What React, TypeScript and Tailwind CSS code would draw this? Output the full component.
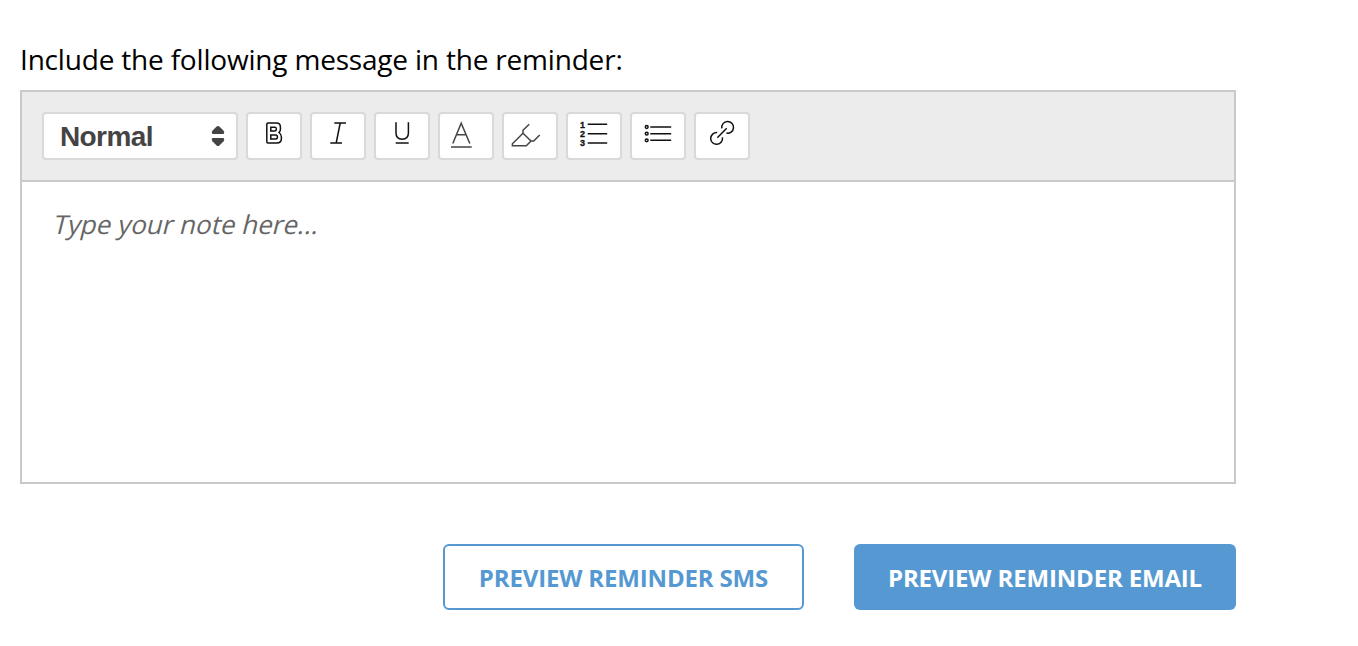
import React from 'react';

type ToolProps = {
    label: string;
    children: React.ReactNode;
};

const ToolButton: React.FC<ToolProps> = ({ label, children }) => (
    <button type="button" aria-label={label} className="h-12 w-14 rounded-[4px] border-2 border-[#d9d9d9] bg-white">
        <svg viewBox="2 2 52 44" className="block h-[44px] w-[52px]" fill="none" stroke="#111" strokeWidth="1.5">
            {children}
        </svg>
    </button>
);

const Toolbar: React.FC = () => (
    <div className="flex h-[90px] items-start gap-2 border-b-2 border-[#c9c9c9] bg-[#ececec] p-5">
        <button
            type="button"
            className="flex h-12 w-[196px] items-center justify-between rounded-[4px] border-2 border-[#d9d9d9] bg-white pl-4 pr-[11px] text-[#444]"
        >
            <span className="pt-0.5 font-['Liberation_Sans',sans-serif] text-[28px] font-bold leading-[42px] tracking-[-0.6px]">Normal</span>
            <svg viewBox="0 0 14 22" className="h-[22px] w-[14px]" fill="#444">
                <path d="M5.6 1.6Q7 .4 8.4 1.6L12.6 5.8Q14 7.4 12.6 9H1.4Q0 7.4 1.4 5.8Z" />
                <path d="M1.4 13H12.6Q14 14.6 12.6 16.2L8.4 20.4Q7 21.6 5.6 20.4L1.4 16.2Q0 14.6 1.4 13Z" />
            </svg>
        </button>

        <ToolButton label="Bold">
            <path d="M22 11H30.4Q34.4 11 34.4 15V17.5Q34.4 19 33 20.5Q35.4 22.4 35.4 25V26.5Q35.4 31 30.8 31H22Q20.8 31 20.8 29.8V12.2Q20.8 11 22 11Z" />
            <path d="M24.8 15.2H29Q30.4 15.2 30.4 17T29 18.9H24.8ZM24.8 23H29.8Q31.4 23 31.4 25T29.8 27H24.8Z" />
        </ToolButton>
        <ToolButton label="Italic">
            <path d="M24.3 11H36M20.3 31H32M30.2 11L26.2 31" />
        </ToolButton>
        <ToolButton label="Underline">
            <path d="M22 10.3V21Q22 27.2 28.2 27.2T34.4 21V10.3M21.7 31H34.7" />
        </ToolButton>
        <ToolButton label="Text color">
            <path stroke="#444" d="M14.8 31.5L23.2 11.2L31.8 31.5M18.2 22.8H28.3M13 35H33.7" />
        </ToolButton>
        <ToolButton label="Highlight">
            <path stroke="#444" d="M27.2 12.2L21 18.3V21.3L10.4 31.7V33.7H24.3L29 29L21 21.3M29 29H31.7L37.7 23" />
        </ToolButton>
        <ToolButton label="Numbered list">
            <path d="M21.7 12.3H41.2M21.7 21.7H41.2M21.7 31H41.2" />
            <g fill="#111" stroke="#111" strokeWidth="0.3" className="font-['Liberation_Sans',sans-serif] text-[9px] font-bold">
                <text x="13.9" y="15.5">1</text>
                <text x="13.9" y="24.9">2</text>
                <text x="13.9" y="34.2">3</text>
            </g>
        </ToolButton>
        <ToolButton label="Bullet list">
            <path d="M20.3 15H41.2M20.3 21.7H41.2M20.3 28.3H41.2" />
            <circle cx="16.7" cy="15" r="1.4" />
            <circle cx="16.7" cy="21.7" r="1.4" />
            <circle cx="16.7" cy="28.3" r="1.4" />
        </ToolButton>
        <ToolButton label="Link">
            <path d="M23.2 20.6A5.9 5.9 0 1 0 28.4 25.4M27.8 16.3A5.9 5.9 0 1 1 32.4 21.1M23.3 25.7L32.7 16.3" />
        </ToolButton>
    </div>
);

const App: React.FC = () => {
    return (
        <div className="h-[646px] w-[1358px] bg-white pl-5 pt-10 font-['Open_Sans',sans-serif]">
            <div className="w-[1216px]">
                <p className="h-[50px] whitespace-nowrap text-[28px] leading-[38px] tracking-[-0.19px] text-black">
                    Include the following message in the reminder:
                </p>

                <div className="h-[394px] border-2 border-[#c9c9c9]">
                    <Toolbar />
                    <div className="px-[30px] pt-6">
                        {/* slanted upright face instead of the true italic */}
                        <p className="w-fit origin-[0_28px] skew-x-[-14deg] text-[26px] leading-9 text-[#666]">Type your note here...</p>
                    </div>
                </div>

                <div className="mt-[60px] flex justify-end gap-[50px] whitespace-nowrap text-[24px] font-bold tracking-[-0.16px]">
                    <button type="button" className="h-[66px] w-[361px] rounded-[6px] border-2 border-[#5699d2] bg-white pt-0.5 text-[#5699d2]">
                        PREVIEW REMINDER SMS
                    </button>
                    <button type="button" className="h-[66px] w-[382px] rounded-[6px] bg-[#5699d2] pt-0.5 text-white">
                        PREVIEW REMINDER EMAIL
                    </button>
                </div>
            </div>
        </div>
    );
};

export default App;
